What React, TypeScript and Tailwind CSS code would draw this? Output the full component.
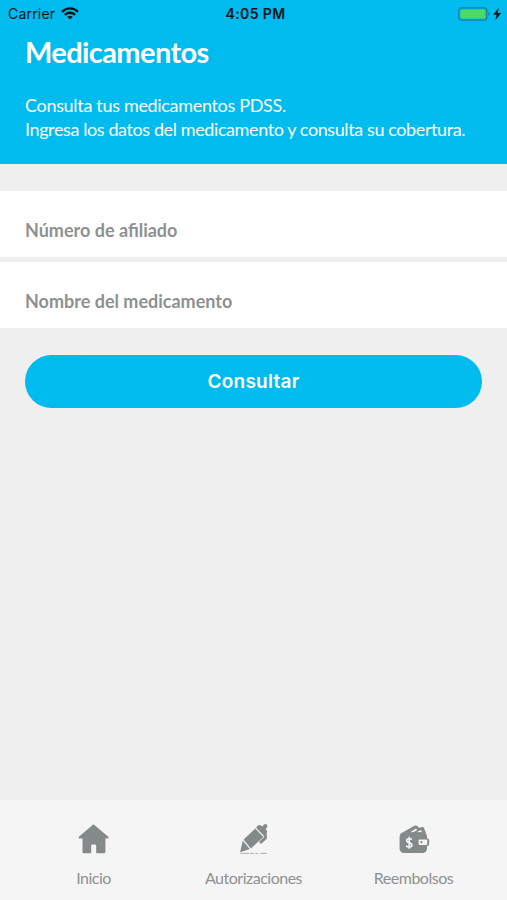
import type {ReactNode} from 'react';

// ** Icons
const WifiIcon = () => (
    <svg width="18" height="13" viewBox="0 0 18 13" fill="none" stroke="#06171c" strokeWidth="2.3">
        <path d="M1 4.9C5.5 .3 12.5 .3 17 4.9"/>
        <path d="M3.8 7.9c3-2.9 7.4-2.9 10.4 0"/>
        <path d="M9 12.4 6.3 9.7c1.5-1.4 3.9-1.4 5.4 0z" fill="#06171c" stroke="none"/>
    </svg>
);

const BatteryIcon = () => (
    <svg width="45" height="14" viewBox="0 0 45 14">
        <rect x=".8" y=".8" width="28" height="12.4" rx="3" fill="none" stroke="#187f9c" strokeWidth="1.2"/>
        <rect x="2.4" y="2.4" width="24.8" height="9.2" rx="1.4" fill="#4cd964"/>
        <path d="M30.3 5v4c1.7-.6 1.7-3.4 0-4z" fill="#187f9c"/>
        <path d="M40.8.8 35.2 7.8h3.4L37.3 13.2 43.2 5.9h-3.5z" fill="#06171c"/>
    </svg>
);

const HomeIcon = () => (
    <svg width="32" height="32" viewBox="0 0 32 32" fill="#848989">
        <path d="M15.5 1.2 30.3 13.7c.6.8.2 1.9-.8 1.9H27.4V29.2q0 1-1 1H18.2V22.6q0-1-1-1H14.2q-1 0-1 1V30.2H5.5q-1 0-1-1V15.6H1.7c-1 0-1.5-1.1-.8-1.9z"/>
    </svg>
);

const PencilIcon = () => (
    <svg width="32" height="32" viewBox="0 0 32 32" fill="#848989">
        <path d="M5.9 16.6 17.3 5.8 25 14 12.9 25.2z" stroke="#848989" strokeWidth=".6" strokeLinejoin="round"/>
        <path d="M4.8 17.8 11.7 26 2.1 29.3z"/>
        <path d="M18.2 4.8q1-3.1 3.8-2.7l2.5 1.4 1.6-2.2h2.6l.8 2.8-1.9 1.6 1.4 2.3-.3 2.8-3.1 1.6z"/>
        <path d="M27.3 11.8v3.4l-4.4 3.9" fill="none" stroke="#848989" strokeWidth="3" strokeLinecap="round"/>
        <path d="M2.2 30.4H29" stroke="#a9acac" strokeWidth=".9" strokeDasharray="9 1 4 1 3 2"/>
    </svg>
);

const WalletIcon = () => (
    <svg width="32" height="32" viewBox="0 0 32 32">
        <path d="M4 9.8 17 2.6q1.7-.7 2.7.8l1.4 1.4 3.1-.8q1.3-.2 1.7.8l2.1 5.4z" fill="#848989"/>
        <path d="M11.8 9.6 18 5.6l1.2 1.5-4.2 2.5zM18 9.6l5-2.7 1.1 2.7z" fill="#f5f5f5"/>
        <rect x="1.6" y="9.3" width="27.4" height="20.7" rx="4.4" fill="#848989"/>
        <rect x="20" y="15.4" width="11.2" height="7.6" rx="2" fill="#848989"/>
        <rect x="20.6" y="16.4" width="8.6" height="5.6" rx="1" fill="#f5f5f5"/>
        <circle cx="23.4" cy="19.2" r="1.1" fill="#848989"/>
        <path d="M13.7 16.6c-1.1-1.3-5-1.3-5 1.1 0 2.7 5.2 1.5 5.2 4.4 0 2.5-4.4 2.4-5.7.8M11.2 13.8v12" fill="none" stroke="#f5f5f5" strokeWidth="1.7"/>
    </svg>
);

const StatusBar = () => (
    <div className="grid h-7 grid-cols-3 items-center pl-2 pr-1 font-['Inter',sans-serif] text-[14px] text-[#06171c]">
        <div className="-mt-0.5 flex items-center gap-1.5">
            <span className="tracking-[0.2px]">Carrier</span>
            <WifiIcon/>
        </div>
        <span className="-mt-0.5 text-center font-semibold tracking-[0.4px]">4:05 PM</span>
        <div className="-mt-px flex justify-end">
            <BatteryIcon/>
        </div>
    </div>
);

const Field = ({label}: { label: string }) => (
    <label className="flex h-[66px] items-center bg-white px-[25px] pt-3">
        <input
            className="w-full text-[18px] font-bold outline-none placeholder:text-[#8e9191]"
            placeholder={label}
        />
    </label>
);

const TabItem = ({label, icon}: { label: string; icon: ReactNode }) => (
    <a className="flex w-40 flex-col items-center pt-[23px]">
        {icon}
        <span className="mt-[11px] text-[16px] leading-6 tracking-[-0.5px]">{label}</span>
    </a>
);

const App = () => {
    return (
        <div className="flex h-[900px] w-[507px] flex-col bg-[#efefef] font-['Lato',sans-serif]">
            <header className="h-[164px] bg-[#00bbee] text-white">
                <StatusBar/>
                <div className="px-[25px]">
                    <h1 className="mt-1 text-[29px] leading-10 font-bold tracking-[-0.6px]">Medicamentos</h1>
                    <p className="mt-[21px] text-[18px] leading-6 whitespace-nowrap tracking-[-0.4px]">
                        <span className="tracking-[-0.32px]">Consulta tus medicamentos PDSS.</span>
                        <br/>
                        Ingresa los datos del medicamento y consulta su cobertura.
                    </p>
                </div>
            </header>

            <main className="flex-1 pt-[27px]">
                <div className="flex flex-col gap-[5px]">
                    <Field label="Número de afiliado"/>
                    <Field label="Nombre del medicamento"/>
                </div>
                <div className="px-[25px] pt-[27px]">
                    <button className="h-[53px] w-full rounded-full bg-[#00bbee] pt-0.5 font-['Inter',sans-serif] text-[19px] font-semibold tracking-[0.25px] text-white">
                        Consultar
                    </button>
                </div>
            </main>

            <nav className="flex h-[100px] justify-center bg-[#f5f5f5] text-[#8e9191]">
                <TabItem label="Inicio" icon={<HomeIcon/>}/>
                <TabItem label="Autorizaciones" icon={<PencilIcon/>}/>
                <TabItem label="Reembolsos" icon={<WalletIcon/>}/>
            </nav>
        </div>
    );
};

export default App;
